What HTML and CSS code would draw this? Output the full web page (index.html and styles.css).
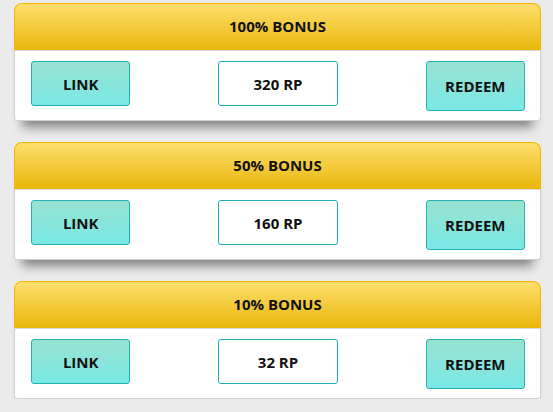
FILE: index.html
```html
<!DOCTYPE html>
<html lang="en">
<head>
    <meta charset="UTF-8" />
    <meta name="viewport" content="width=device-width, initial-scale=1.0" />
    <title>Bonus Packs</title>
    <link rel="stylesheet" href="styles.css">
</head>
<body>
    <div class="packs">
        <!-- Bonus pack cards -->
        <div class="pack">
            <div class="pack-header">100% BONUS</div>
            <div class="pack-body">
                <button class="button link">LINK</button>
                <div class="points">320 RP</div>
                <button class="button redeem">REDEEM</button>
            </div>
        </div>
        <div class="pack">
            <div class="pack-header">50% BONUS</div>
            <div class="pack-body">
                <button class="button link">LINK</button>
                <div class="points">160 RP</div>
                <button class="button redeem">REDEEM</button>
            </div>
        </div>
        <div class="pack">
            <div class="pack-header">10% BONUS</div>
            <div class="pack-body">
                <button class="button link">LINK</button>
                <div class="points">32 RP</div>
                <button class="button redeem">REDEEM</button>
            </div>
        </div>
    </div>
</body>
</html>
```

FILE: styles.css
```css
/* Page background */
body {
    margin: 0;
    font-family: "Open Sans", Arial, sans-serif;
    background-color: #ebebeb;
    color: #111;
}

.packs {
    display: flex;
    flex-direction: column;
    gap: 21px;
    padding: 3px 12px 0 14px;
}

/* Card with yellow header */
.pack {
    width: 527px;
    border-radius: 8px 8px 3px 3px;
    box-shadow: 0 14px 10px -8px rgba(0, 0, 0, 0.45);
    background-color: white;
}

.pack-header {
    height: 46px;
    line-height: 45px;
    text-align: center;
    font-size: 15px;
    font-weight: bold;
    background: linear-gradient(#fede6e, #e9b70a);
    border: 1px solid #f2b600;
    border-bottom: none;
    border-radius: 8px 8px 0 0;
}

.pack-body {
    height: 71px;
    box-sizing: border-box;
    display: flex;
    align-items: flex-start;
    justify-content: space-between;
    padding: 10px 15px 0 16px;
    border: 1px solid #cfcfcf;
    border-top: 1px solid #d8d8d8;
    border-radius: 0 0 3px 3px;
}

.button {
    font-family: inherit;
    font-size: 15px;
    font-weight: bold;
    color: #111;
    width: 100px;
    height: 45px;
    background: linear-gradient(#98e2cf, #79e8e6);
    border: 1px solid #22b3b5;
    border-radius: 3px;
    cursor: pointer;
}

.button.redeem {
    height: 50px;
}

.points {
    width: 120px;
    height: 45px;
    box-sizing: border-box;
    border: 1px solid #1cb1b8;
    border-radius: 3px;
    display: flex;
    align-items: center;
    justify-content: center;
    font-size: 15px;
    font-weight: bold;
    margin: 0 88px;
}
```
